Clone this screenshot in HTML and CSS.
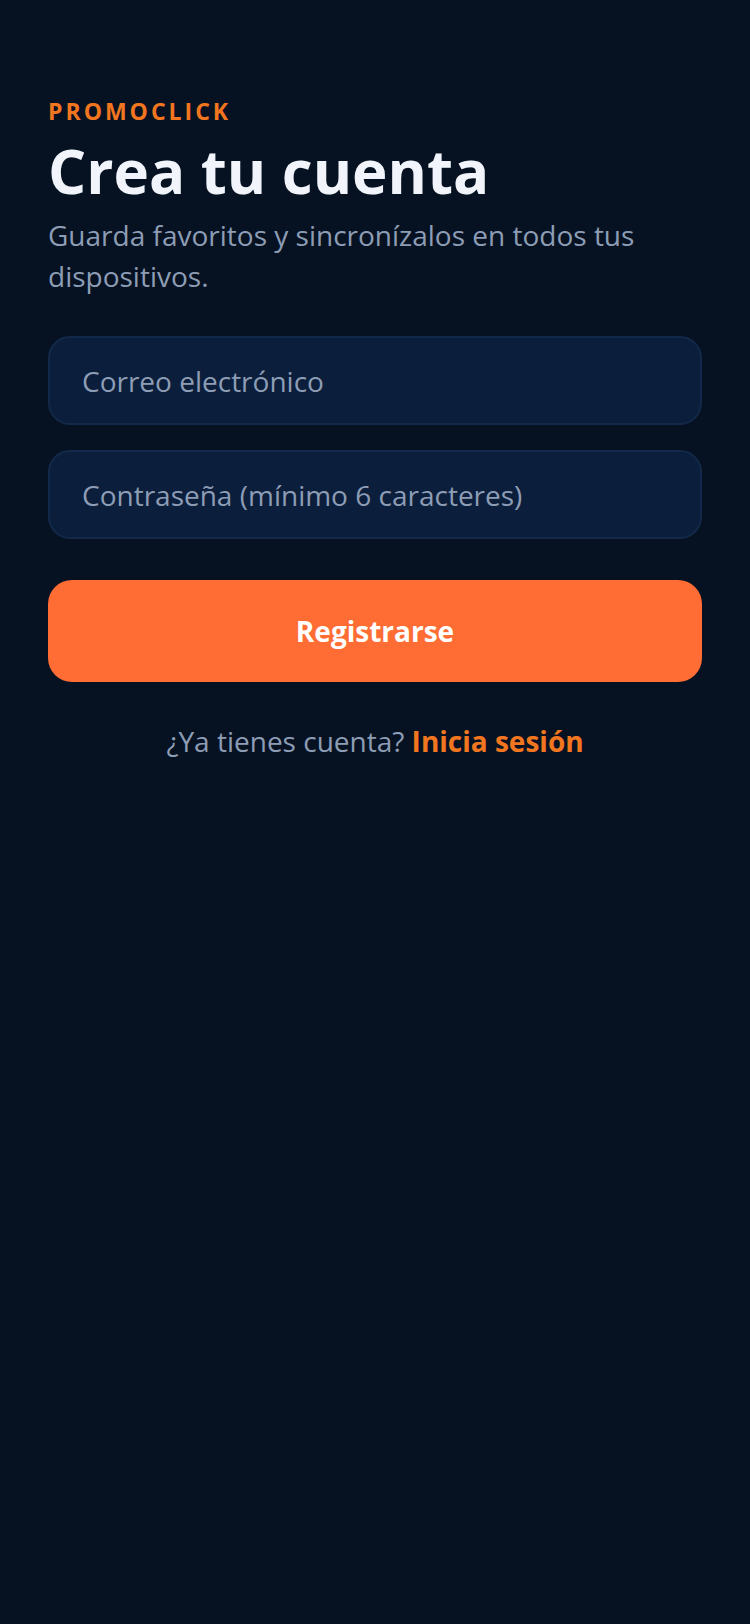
FILE: index.html
```html
<!DOCTYPE html>
<html lang="es">
<head>
<meta charset="utf-8">
<meta name="viewport" content="width=750">
<link rel="stylesheet" href="styles.css">
<title>PromoClick - Crea tu cuenta</title>
</head>
<body>
<main class="page">
  <header class="head">
    <div class="brand">PROMOCLICK</div>
    <h1 class="title">Crea tu cuenta</h1>
    <p class="subtitle">Guarda favoritos y sincronízalos en todos tus dispositivos.</p>
  </header>
  <form class="form">
    <input class="field" type="email" placeholder="Correo electrónico">
    <input class="field" type="password" placeholder="Contraseña (mínimo 6 caracteres)">
    <button class="submit" type="button">Registrarse</button>
  </form>
  <p class="alt">¿Ya tienes cuenta? <a class="alt-link" href="#">Inicia sesión</a></p>
</main>
</body>
</html>
```
FILE: styles.css
```css
html, body {
  margin: 0;
  padding: 0;
  background: #061222;
}
body {
  width: 750px;
  min-height: 1624px;
  font-family: "Open Sans", "Noto Sans", sans-serif;
}
.page {
  padding: 96px 48px 0;
  display: flex;
  flex-direction: column;
}
.head {
  display: flex;
  flex-direction: column;
}
.brand {
  color: #f2761f;
  font-weight: 700;
  font-size: 23px;
  letter-spacing: 3px;
  line-height: 31px;
}
.title {
  margin: 8px 0 0;
  color: #f1f5fb;
  font-size: 60px;
  font-weight: 700;
  line-height: 72px;
  letter-spacing: 0;
}
.subtitle {
  margin: 8px 0 0;
  color: #8d9db5;
  font-size: 28px;
  line-height: 41px;
  font-weight: 400;
}
.form {
  margin-top: 39px;
  display: flex;
  flex-direction: column;
  gap: 25px;
}
.field {
  box-sizing: border-box;
  height: 89px;
  width: 100%;
  padding: 0 32px;
  border: 2px solid #13294a;
  border-radius: 22px;
  background: #0b1e3b;
  color: #e6edf7;
  font-family: inherit;
  font-size: 28px;
  outline: none;
}
.field::placeholder {
  color: #8d9db5;
  opacity: 1;
}
.submit {
  margin-top: 16px;
  height: 102px;
  border: none;
  border-radius: 24px;
  background: #ff6d35;
  color: #ffffff;
  font-family: inherit;
  font-size: 28px;
  font-weight: 700;
}
.alt {
  margin: 39px 0 0;
  text-align: center;
  color: #8d9db5;
  font-size: 28px;
  line-height: 40px;
}
.alt-link {
  color: #f2761f;
  font-weight: 700;
  text-decoration: none;
}
```
